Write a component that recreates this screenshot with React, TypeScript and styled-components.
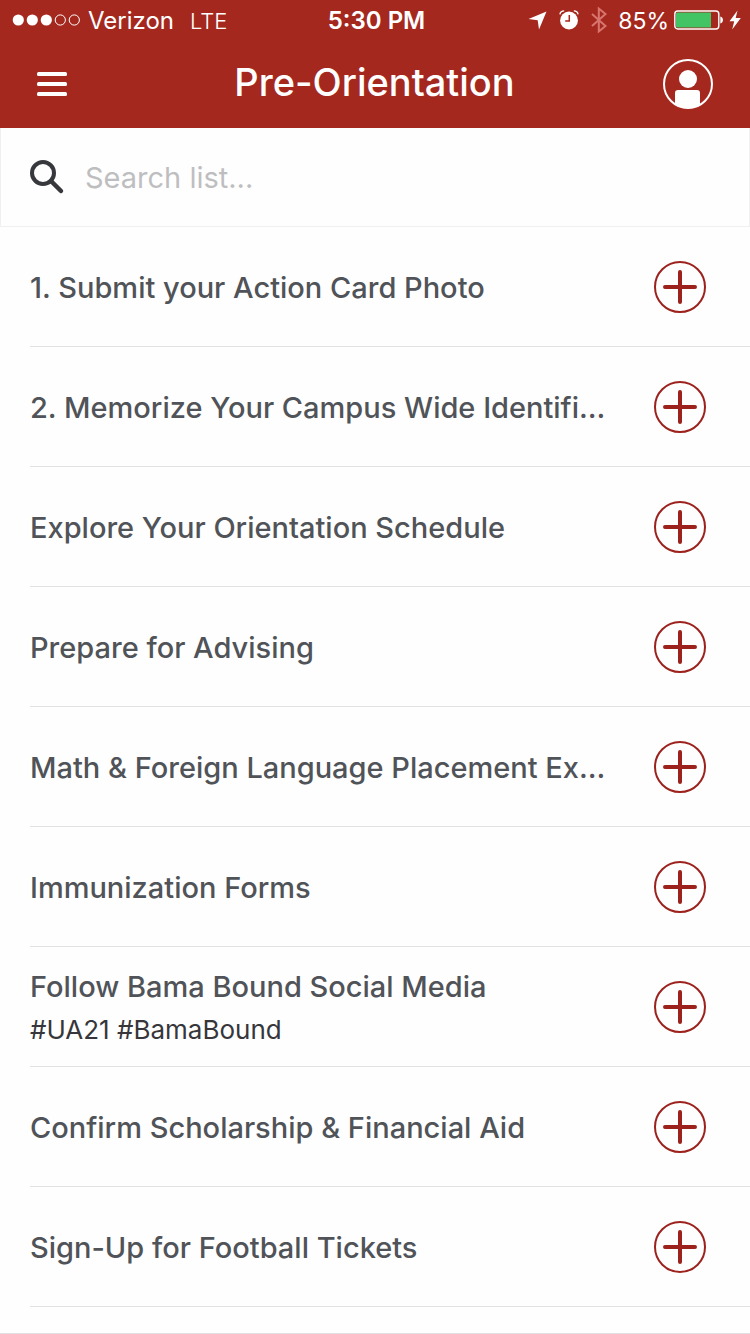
import React from "react";
import styled, { createGlobalStyle } from "styled-components";

const GlobalStyle = createGlobalStyle`
  *, *::before, *::after { box-sizing: border-box; }
  body {
    margin: 0;
    background: #fefefe;
    font-family: Inter, "Liberation Sans", sans-serif;
  }
`;

const Screen = styled.div`
  min-height: 100vh;
  display: flex;
  flex-direction: column;
  border-bottom: 1px solid #e0e0e2;
`;

const Header = styled.header`
  background: #a5281f;
  color: #fff;
`;

const StatusBar = styled.div`
  display: grid;
  grid-template-columns: 1fr auto 1fr;
  align-items: center;
  height: 40px;
  padding: 0 9px 0 12px;
  font-size: 24px;
  line-height: 32px;
  white-space: nowrap;
`;

const StatusGroup = styled.div<{ $end?: boolean }>`
  display: flex;
  align-items: center;
  justify-content: ${(p) => (p.$end ? "flex-end" : "flex-start")};
  gap: ${(p) => (p.$end ? "5px" : "7px")};
`;

const StatusIcons = styled.div`
  display: flex;
  align-items: center;
  gap: 12px;
  margin-right: 6px;
`;

const StatusText = styled.span<{ $size?: number; $light?: boolean }>`
  padding-top: 2px;
  font-size: ${(p) => p.$size ?? 24}px;
  font-weight: ${(p) => (p.$light ? 300 : 400)};
`;

const Carrier = styled.div`
  display: flex;
  align-items: baseline;
  gap: 16px;
`;

const Clock = styled.time`
  padding-top: 2px;
  font-weight: 600;
`;

const NavBar = styled.div`
  display: flex;
  align-items: center;
  justify-content: space-between;
  height: 88px;
  padding: 0 37px 0 36px;
`;

const Title = styled.h1`
  margin: 0;
  padding-bottom: 4px;
  font-size: 38px;
  line-height: 48px;
  font-weight: 500;
`;

const IconButton = styled.button`
  display: flex;
  align-items: center;
  justify-content: center;
  flex: none;
  padding: 0;
  border: 0;
  background: none;
  color: inherit;
  cursor: pointer;
`;

const NavSide = styled.div<{ $end?: boolean }>`
  display: flex;
  width: 52px;
  justify-content: ${(p) => (p.$end ? "flex-end" : "flex-start")};
`;

const SearchBar = styled.label`
  display: flex;
  align-items: center;
  gap: 20px;
  height: 99px;
  padding: 0 28px;
  border: 1px solid #f0f0f2;
  border-top: 0;
`;

const SearchInput = styled.input`
  flex: 1;
  min-width: 0;
  padding: 2px 0 0;
  border: 0;
  outline: 0;
  background: transparent;
  color: #4d5157;
  font: 400 29px/40px Inter, "Liberation Sans", sans-serif;
  &::placeholder { color: #bebec1; opacity: 1; }
`;

const List = styled.ul`
  margin: 0;
  padding: 0 0 0 30px;
  list-style: none;
`;

const Row = styled.li`
  display: flex;
  align-items: center;
  justify-content: space-between;
  height: 120px;
  padding-right: 43px;
  border-bottom: 1px solid #e2e2e4;
`;

const RowText = styled.div`
  min-width: 0;
  padding-top: 2px;
  white-space: nowrap;
`;

const RowTitle = styled.div`
  color: #505358;
  font-size: 29px;
  line-height: 44px;
  font-weight: 500;
`;

const RowNote = styled.div`
  color: #36363b;
  font-size: 26px;
  line-height: 42px;
`;

const AddButton = styled(IconButton)`
  color: #9c231d;
`;

const items: { title: string; note?: string }[] = [
  { title: "1. Submit your Action Card Photo" },
  { title: "2. Memorize Your Campus Wide Identifi..." },
  { title: "Explore Your Orientation Schedule" },
  { title: "Prepare for Advising" },
  { title: "Math & Foreign Language Placement Ex..." },
  { title: "Immunization Forms" },
  { title: "Follow Bama Bound Social Media", note: "#UA21 #BamaBound" },
  { title: "Confirm Scholarship & Financial Aid" },
  { title: "Sign-Up for Football Tickets" },
];

const Signal = () => (
  <svg width="69" height="12" viewBox="0 0 69 12" fill="#fff" aria-hidden="true">
    <circle cx="6.3" cy="6" r="5.6" />
    <circle cx="20.3" cy="6" r="5.6" />
    <circle cx="34.3" cy="6" r="5.6" />
    <circle cx="48.3" cy="6" r="5.1" fill="none" stroke="#fff" />
    <circle cx="62.3" cy="6" r="5.1" fill="none" stroke="#fff" />
  </svg>
);

const LocationIcon = () => (
  <svg width="19" height="19" viewBox="0 0 19 19" fill="#fff" aria-hidden="true">
    <path d="M18.5.5 11 18.5 9.7 9.3.5 8Z" />
  </svg>
);

const AlarmIcon = () => (
  <svg width="20" height="20" viewBox="0 0 20 20" fill="none" aria-hidden="true">
    <circle cx="10" cy="10.5" r="8.9" fill="#fff" />
    <path d="M.9 4.400C1.200 2.400 3 .9 5.200.9M19.100 4.400C18.800 2.400 17 .9 14.800.9" stroke="#fff" strokeWidth="1.300" />
    <path d="M10.300 5v6H6.200" stroke="#a5281f" strokeWidth="1.500" />
  </svg>
);

const BluetoothIcon = () => (
  <svg width="16" height="28" viewBox="0 0 16 28" fill="none" stroke="#d9756f" strokeWidth="2" aria-hidden="true">
    <path d="M1 8l13.500 12-6.700 5.500v-23L14.500 8 1 20" />
  </svg>
);

const BatteryIcon = () => (
  <svg width="50" height="20" viewBox="0 0 50 20" fill="none" aria-hidden="true">
    <rect x=".8" y="1" width="44" height="18" rx="3" stroke="#fff" strokeWidth="1.4" />
    <path d="M3.500 2.500H37v15H3.500a1.500 1.500 0 0 1-1.500-1.500V4a1.500 1.500 0 0 1 1.500-1.500Z" fill="#43c464" />
    <path d="M46.300 6.500c3.500.5 3.500 6.500 0 7Z" fill="#fff" />
  </svg>
);

const BoltIcon = () => (
  <svg width="12" height="20" viewBox="0 0 12 20" fill="#fff" aria-hidden="true">
    <path d="M8.500.5.500 11.200h4.700L3.200 19.500 11.800 8H6.700Z" />
  </svg>
);

const MenuIcon = () => (
  <svg width="32" height="26" viewBox="0 0 32 26" fill="#fff" aria-hidden="true">
    <rect x="1" y="1" width="30" height="4" rx="1.500" />
    <rect x="1" y="11" width="30" height="4" rx="1.500" />
    <rect x="1" y="21" width="30" height="4" rx="1.500" />
  </svg>
);

const ProfileIcon = () => (
  <svg width="50" height="50" viewBox="0 0 50 50" aria-hidden="true">
    <circle cx="25" cy="25" r="24" fill="none" stroke="#fff" strokeWidth="2" />
    <circle cx="25" cy="20" r="9" fill="#fff" />
    <path d="M12 45V34a3 3 0 0 1 3-3h19a3 3 0 0 1 3 3v11q-5 4.500-12 4.500T12 45Z" fill="#fff" />
  </svg>
);

const SearchIcon = () => (
  <svg width="36" height="36" viewBox="0 0 36 36" fill="none" stroke="#36383c" aria-hidden="true">
    <circle cx="14" cy="14" r="11" strokeWidth="4" />
    <path d="m22 22 10 10" strokeWidth="4.500" strokeLinecap="round" />
  </svg>
);

const AddIcon = () => (
  <svg width="54" height="54" viewBox="0 0 54 54" fill="none" stroke="currentColor" aria-hidden="true">
    <circle cx="27" cy="27" r="25" strokeWidth="2" />
    <path d="M27 12v30M12 27h30" strokeWidth="4" strokeLinecap="round" />
  </svg>
);

export default function App() {
  return (
    <Screen>
      <GlobalStyle />
      <Header>
        <StatusBar>
          <StatusGroup>
            <Signal />
            <Carrier>
              <StatusText>Verizon</StatusText>
              <StatusText $size={22} $light>LTE</StatusText>
            </Carrier>
          </StatusGroup>
          <Clock>5:30 PM</Clock>
          <StatusGroup $end>
            <StatusIcons>
              <LocationIcon />
              <AlarmIcon />
              <BluetoothIcon />
            </StatusIcons>
            <StatusText $size={23}>85%</StatusText>
            <BatteryIcon />
            <BoltIcon />
          </StatusGroup>
        </StatusBar>
        <NavBar>
          <NavSide>
            <IconButton type="button" aria-label="Menu">
              <MenuIcon />
            </IconButton>
          </NavSide>
          <Title>Pre-Orientation</Title>
          <NavSide $end>
            <IconButton type="button" aria-label="Profile">
              <ProfileIcon />
            </IconButton>
          </NavSide>
        </NavBar>
      </Header>
      <main>
        <SearchBar>
          <SearchIcon />
          <SearchInput type="text" placeholder="Search list..." aria-label="Search list" />
        </SearchBar>
        <List>
          {items.map((item) => (
            <Row key={item.title}>
              <RowText>
                <RowTitle>{item.title}</RowTitle>
                {item.note && <RowNote>{item.note}</RowNote>}
              </RowText>
              <AddButton type="button" aria-label={`Add ${item.title}`}>
                <AddIcon />
              </AddButton>
            </Row>
          ))}
        </List>
      </main>
    </Screen>
  );
}
